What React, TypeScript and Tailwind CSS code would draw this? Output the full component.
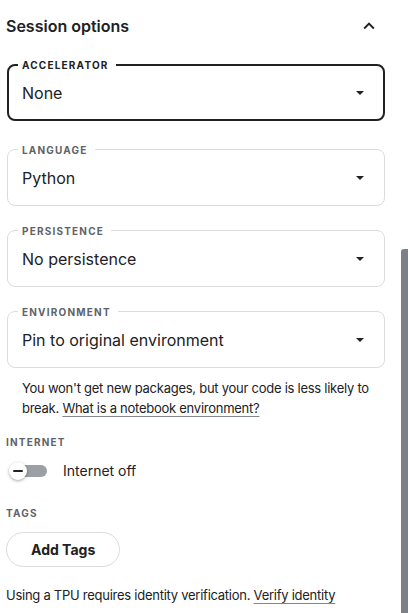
import React from "react";

type FieldProps = {
  label: string;
  value: string;
  active?: boolean;
  className?: string;
};

function SelectField({ label, value, active, className = "" }: FieldProps) {
  return (
    <div
      className={`relative flex h-[57px] items-center justify-between rounded-lg bg-white ${
        active ? "border-2 border-[#202124] pl-[13px] pr-[19px]" : "border border-[#dadce0] pl-[14px] pr-[20px]"
      } ${className}`}
    >
      {/* floating legend sitting on the top border */}
      <span
        className={`absolute ${active ? "left-[9px] -top-[9px]" : "left-[10px] -top-[8px]"} bg-white pl-1 pr-[7px] text-[10px] font-bold uppercase leading-4 tracking-[0.12em] ${
          active ? "text-[#202124]" : "text-[#5f6368]"
        }`}
      >
        {label}
      </span>
      <span className="text-base text-[#202124]">{value}</span>
      <svg width="8" height="4" viewBox="0 0 8 4" className="shrink-0">
        <polygon points="0,0 8,0 4,4" fill="#202124" />
      </svg>
    </div>
  );
}

export default function App() {
  return (
    <div className="relative h-[613px] w-[408px] overflow-hidden bg-white font-['Inter','Noto_Sans',sans-serif] text-[#202124]">
      <div className="pl-[6px] pr-[23px] pt-[14px]">
        {/* Header */}
        <div className="flex items-center justify-between">
          <h2 className="text-base font-semibold leading-6">Session options</h2>
          <svg width="22" height="22" viewBox="0 0 24 24" className="mr-[5px]">
            <path d="M12 8l-6 6 1.41 1.41L12 10.83l4.59 4.58L18 14z" fill="#202124" />
          </svg>
        </div>

        <div className="pl-px">
          <SelectField label="Accelerator" value="None" active className="mt-[26px]" />
          <SelectField label="Language" value="Python" className="mt-[28px]" />
          <SelectField label="Persistence" value="No persistence" className="mt-[24px]" />
          <SelectField label="Environment" value="Pin to original environment" className="mt-[24px]" />

          <p className="mt-[10px] pl-[15px] text-[13px] leading-5 tracking-[-0.02em] text-[#202124]">
            You won't get new packages, but your code is less likely to break.{" "}
            <a href="#" className="underline decoration-[#80868b] underline-offset-[3px]">
              What is a notebook environment?
            </a>
          </p>
        </div>

        {/* Internet */}
        <div className="mt-[16px] text-[10px] font-bold uppercase leading-4 tracking-[0.12em] text-[#5f6368]">
          Internet
        </div>
        <div className="mt-[11px] flex h-5 items-center">
          <div className="relative ml-[3px] h-[18px] w-[38px]">
            <div className="absolute left-[2px] top-[3px] h-3 w-[36px] rounded-full bg-[#9aa0a6]" />
            <div className="absolute left-0 top-0 flex h-[18px] w-[18px] items-center justify-center rounded-full bg-white shadow-[0_1px_3px_rgba(0,0,0,0.35)]">
              <div className="h-[2px] w-[10px] rounded bg-[#202124]" />
            </div>
          </div>
          <span className="ml-[16px] text-sm leading-5">Internet off</span>
        </div>

        {/* Tags */}
        <div className="mt-[24px] text-[10px] font-bold uppercase leading-4 tracking-[0.12em] text-[#5f6368]">
          Tags
        </div>
        <button className="mt-[11px] h-[35px] rounded-full border border-[#dadce0] px-6 text-sm font-bold text-[#202124]">
          Add Tags
        </button>

        <p className="mt-[18px] text-[13px] leading-5 tracking-[-0.02em]">
          Using a TPU requires identity verification.{" "}
          <a href="#" className="underline decoration-[#80868b] underline-offset-[3px]">
            Verify identity
          </a>
        </p>
      </div>

      {/* scrollbar thumb */}
      <div className="absolute right-0 top-[249px] h-[364px] w-[7px] rounded-tl-[3px] bg-[#7c8087]" />
    </div>
  );
}
